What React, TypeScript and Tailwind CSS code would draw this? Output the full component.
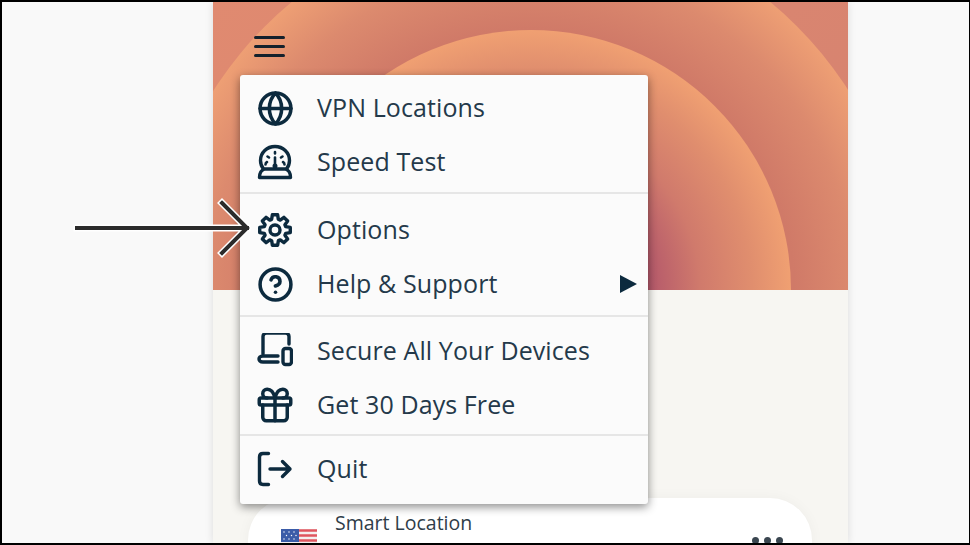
import { Gift, Globe, CircleQuestionMark } from "lucide-react";
import type { ReactNode } from "react";

// 8 tooth outline, the lucide gears have the wrong shape for this one
const gearPath = Array.from({ length: 8 }, (_, i) => {
  const a = (i * Math.PI) / 4;
  const pt = (r: number, d: number) => {
    const x = 18 + r * Math.sin(a + d);
    const y = 18 - r * Math.cos(a + d);
    return `${x.toFixed(2)} ${y.toFixed(2)}`;
  };
  return `${i === 0 ? "M" : "L"}${pt(15.5, -0.17)}L${pt(15.5, 0.17)}L${pt(11.2, 0.3)}L${pt(11.2, 0.48)}`;
}).join("") + "Z";

function GearIcon() {
  return (
    <svg viewBox="0 0 36 36" fill="none" stroke="currentColor" strokeWidth="3.400" strokeLinejoin="round" className="h-9 w-9">
      <path d={gearPath} />
      <circle cx="18" cy="18" r="5" />
    </svg>
  );
}

function SpeedIcon() {
  return (
    <svg viewBox="0 0 36 36" fill="none" stroke="currentColor" strokeWidth="3.400" strokeLinecap="round" strokeLinejoin="round" className="h-9 w-9">
      <path d="M6.500 25C4.500 22.500 3.500 19.500 3.500 16.500C3.500 8.500 10 2.500 18 2.500s14.500 6 14.500 14c0 3-1 6-3 8.500" />
      <path d="M2.500 33.500c0-4.500 2-7.500 5-8.500h21c3 1 5 4 5 8.500z" />
      <path d="M8.500 20.500c0-1 .5-2 1.500-2.500M10.500 12.500l1.500 1M18 8v1.500M25.500 12.500l-1.500 1M27.500 20.500c0-1-.5-2-1.500-2.500" strokeWidth="2.600" />
      <path d="M18 13.500v8.500" strokeWidth="2.600" />
      <circle cx="18" cy="22" r="1.500" fill="currentColor" strokeWidth="2" />
    </svg>
  );
}

function DevicesIcon() {
  return (
    <svg viewBox="0 2 36 36" fill="none" stroke="currentColor" strokeWidth="3.400" strokeLinecap="round" strokeLinejoin="round" className="h-9 w-9">
      <path d="M6 23V5.500C6 3.500 7.500 2 9.500 2h19c2 0 3.500 1.500 3.500 3.500V13" />
      <path d="M21 25H6C3 25 2 26.800 2 28s1 3 4 3h15" />
      <rect x="26" y="17.500" width="8.500" height="16" rx="2.500" />
    </svg>
  );
}

function QuitIcon() {
  return (
    <svg viewBox="0 0 36 36" fill="none" stroke="currentColor" strokeWidth="3.400" strokeLinecap="round" strokeLinejoin="round" className="h-9 w-9">
      <path d="M11.500 2.500H6C3.800 2.500 2.500 4 2.500 6v24c0 2 1.300 3.500 3.500 3.500h5.500" />
      <path d="M13 18h20M25.500 10.500l7.500 7.500-7.500 7.500" />
    </svg>
  );
}

function MenuRow({ icon, label, arrow }: { icon: ReactNode; label: string; arrow?: boolean }) {
  return (
    <div className="flex h-[54px] items-center pl-[17px] pr-[11px]">
      <span className="flex w-[36px] items-center justify-center text-[#0c2a3e]">{icon}</span>
      <span className="ml-[24px] flex-1 text-[25px] tracking-[0.1px] text-[#24394a]">{label}</span>
      {arrow && <span className="h-0 w-0 border-y-[9px] border-l-[17px] border-y-transparent border-l-[#0c2a3e]" />}
    </div>
  );
}

function FlagIcon() {
  return (
    <svg viewBox="0 0 36 24" className="h-[24px] w-[36px] shrink-0">
      <rect width="36" height="24" fill="#f4f0f0" />
      <path d="M0 1.500h36M0 6.500h36M0 11.500h36M0 16.500h36" stroke="#e0555f" strokeWidth="2.500" />
      <rect width="18" height="13" fill="#3b5ca8" />
      <path d="M3 3h.01M8 3h.01M13 3h.01M5.500 6.500h.01M10.500 6.500h.01M15 6.500h.01M3 10h.01M8 10h.01M13 10h.01" stroke="#ffffff" strokeWidth="1.400" strokeLinecap="round" />
    </svg>
  );
}

export default function App() {
  return (
    <div className="h-[545px] w-[970px] overflow-hidden bg-black pb-[2px] pl-[2px] pr-[1px] pt-[2px] font-['Open_Sans','Noto_Sans',sans-serif]">
      <div className="relative flex h-full bg-[#f9f9f9]">
        <div className="relative ml-[211px] h-full w-[635px] shrink-0 overflow-hidden bg-[#f7f6f2] shadow-[0_0_8px_rgba(0,0,0,0.12)]">
          <div className="relative h-[288px] overflow-hidden bg-[linear-gradient(135deg,#e08a70,#d58270)]">
            <div className="absolute left-[-58px] top-[-86px] h-[752px] w-[752px] rounded-full bg-[radial-gradient(circle_closest-side,#d07a68_0%,#d07a68_70%,#dc8a6e_86%,#ee9f74_100%)]" />
            <div className="absolute left-[58px] top-[28px] h-[520px] w-[520px] rounded-full bg-[radial-gradient(circle_closest-side,#a4446c_0%,#aa4c6a_38%,#d07a6c_65%,#e08e6e_85%,#f0a072_100%)]" />
            <div className="absolute left-[41px] top-[34px] flex flex-col gap-[6px]">
              <span className="h-[3px] w-[31px] rounded-full bg-[#14212c]" />
              <span className="h-[3px] w-[31px] rounded-full bg-[#14212c]" />
              <span className="h-[3px] w-[31px] rounded-full bg-[#14212c]" />
            </div>
          </div>
          <div className="absolute left-[35px] top-[496px] flex h-[120px] w-[564px] items-start rounded-t-[42px] bg-white pl-[33px] pt-[12px] shadow-[0_0_14px_rgba(0,0,0,0.04)]">
            <div className="mt-[19px]">
              <FlagIcon />
            </div>
            <div className="ml-[18px] text-[19.500px] leading-[26px] text-[#2f3d49]">Smart Location</div>
            <div className="absolute left-[504px] top-[39px] flex gap-[5px]">
              <span className="h-[7px] w-[7px] rounded-full bg-[#3a4650]" />
              <span className="h-[7px] w-[7px] rounded-full bg-[#3a4650]" />
              <span className="h-[7px] w-[7px] rounded-full bg-[#3a4650]" />
            </div>
          </div>
        </div>

        <div className="absolute left-[238px] top-[73px] h-[429px] w-[408px] rounded-[3px] bg-[#fbfbfb] pt-[6px] shadow-[0_3px_10px_rgba(0,0,0,0.45)]">
          <MenuRow icon={<Globe size={37} strokeWidth={2.3} className="shrink-0" />} label="VPN Locations" />
          <MenuRow icon={<SpeedIcon />} label="Speed Test" />
          <div className="mb-[9px] mt-[3px] h-[2px] bg-[#e6e6e6]" />
          <MenuRow icon={<GearIcon />} label="Options" />
          <MenuRow icon={<CircleQuestionMark size={37} strokeWidth={2.3} className="shrink-0" />} label="Help & Support" arrow />
          <div className="mb-[7px] mt-[4px] h-[2px] bg-[#e6e6e6]" />
          <MenuRow icon={<DevicesIcon />} label="Secure All Your Devices" />
          <MenuRow icon={<Gift size={42} strokeWidth={2} className="shrink-0" />} label="Get 30 Days Free" />
          <div className="mb-[6px] mt-[2px] h-[2px] bg-[#e6e6e6]" />
          <MenuRow icon={<QuitIcon />} label="Quit" />
        </div>

        {/* callout arrow pointing at Options */}
        <svg viewBox="0 0 180 62" fill="none" strokeLinecap="square" className="absolute left-[71px] top-[195px] h-[62px] w-[180px]">
          <path d="M4 31H174M149 6L174 31L149 56" stroke="#ffffff" strokeWidth="7" />
          <path d="M4 31H174M149 6L174 31L149 56" stroke="#2b2b2b" strokeWidth="4" />
        </svg>
      </div>
    </div>
  );
}
